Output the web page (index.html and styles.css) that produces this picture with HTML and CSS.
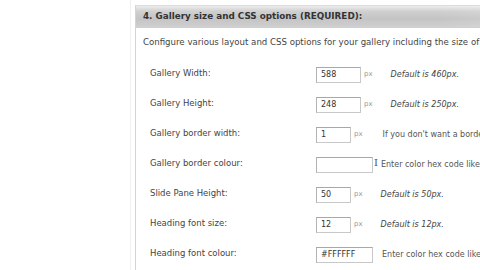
FILE: index.html
```html
<!DOCTYPE html>
<html>
<head>
<meta charset="utf-8">
<link rel="stylesheet" href="styles.css">
</head>
<body>
<div class="page">
  <div class="outer">
    <div class="box">
      <div class="box-head">4. Gallery size and CSS options (REQUIRED):</div>
      <div class="box-body">
        <p class="intro">Configure various layout and CSS options for your gallery including the size of the gallery</p>
        <div class="rows">
          <div class="row"><span class="label">Gallery Width:</span><span class="field w44">588</span><span class="unit">px</span><span class="note em">Default is 460px.</span></div>
          <div class="row"><span class="label">Gallery Height:</span><span class="field w44">248</span><span class="unit">px</span><span class="note em">Default is 250px.</span></div>
          <div class="row"><span class="label">Gallery border width:</span><span class="field w34">1</span><span class="unit">px</span><span class="note plain">If you don't want a border, enter 0.</span></div>
          <div class="row"><span class="label">Gallery border colour:</span><span class="field w56"></span><span class="cursor">I</span><span class="note plain near">Enter color hex code like #000000</span></div>
          <div class="row"><span class="label">Slide Pane Height:</span><span class="field w34">50</span><span class="unit">px</span><span class="note em">Default is 50px.</span></div>
          <div class="row"><span class="label">Heading font size:</span><span class="field w34">12</span><span class="unit">px</span><span class="note em">Default is 12px.</span></div>
          <div class="row"><span class="label">Heading font colour:</span><span class="field w56">#FFFFFF</span><span class="note plain near2">Enter color hex code like #ffffff</span></div>
        </div>
      </div>
    </div>
  </div>
</div>
</body>
</html>
```

FILE: styles.css
```css
html, body {
  margin: 0;
  padding: 0;
  background: #ffffff;
  overflow: hidden;
}
.page {
  width: 480px;
  height: 270px;
  overflow: hidden;
  font-family: "DejaVu Sans", Verdana, sans-serif;
  font-size: 8px;
  color: #333;
  padding-left: 130px;
  box-sizing: border-box;
}
.outer {
  border-left: 1px solid #f0f0f0;
  padding-left: 4px;
  padding-top: 5px;
  height: 100%;
  box-sizing: border-box;
}
.box {
  border-left: 1px solid #d4d4d4;
  border-top: 1px solid #dcdcdc;
  width: 500px;
  height: 300px;
}
.box-head {
  height: 21px;
  line-height: 21px;
  padding-left: 7px;
  font-weight: bold;
  font-size: 8.8px;
  color: #333;
  white-space: nowrap;
  background:
    linear-gradient(to right, rgba(255,255,255,0) 60%, rgba(255,255,255,0.45) 100%),
    linear-gradient(to bottom, #ececec 0%, #d0d0d0 25%, #c4c4c4 60%, #cfcfcf 100%);
  border-bottom: 1px solid #d0d0d0;
}
.box-body {
  padding: 0 0 0 7px;
}
.intro {
  margin: 0;
  padding-top: 9px;
  height: 28px;
  box-sizing: border-box;
  white-space: nowrap;
  line-height: 10px;
  font-size: 8.6px;
  color: #444;
}
.rows {
  padding-top: 3px;
  padding-left: 7px;
}
.row {
  display: flex;
  align-items: center;
  height: 30px;
  white-space: nowrap;
}
.row .label {
  width: 166px;
  flex: none;
  color: #444;
  font-size: 8.5px;
  margin-top: -2px;
}
.field {
  height: 16px;
  box-sizing: border-box;
  border: 1px solid #c8c8c8;
  border-top-color: #a8a8a8;
  border-left-color: #b4b4b4;
  background: #fff;
  padding-left: 4px;
  line-height: 14px;
  color: #333;
  flex: none;
  font-size: 8px;
  margin-top: 1px;
}
.w44 { width: 45px; }
.w34 { width: 35px; }
.w56 { width: 57px; }
.unit {
  margin-left: 3px;
  color: #999;
  font-size: 7px;
}
.note {
  margin-left: 20px;
  color: #555;
}
.note.em {
  font-style: italic;
  color: #444;
  margin-left: 18px;
}
.note.plain { margin-left: 20px; }
.cursor {
  font-family: "DejaVu Serif", serif;
  font-size: 10px;
  color: #555;
  margin-left: 1px;
  margin-top: -4px;
}
.note.near { margin-left: 3px; }
.note.near2 { margin-left: 9px; }
```
